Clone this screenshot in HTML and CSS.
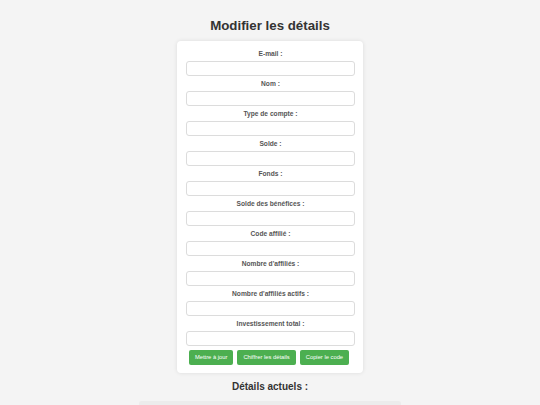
FILE: index.html
```html
<!DOCTYPE html>
<html lang="fr">
<head>
<meta charset="utf-8">
<title>Modifier les détails</title>
<link rel="stylesheet" href="styles.css">
</head>
<body>
<h1 class="title">Modifier les détails</h1>
<form class="card">
  <div class="field"><label>E-mail :</label><input type="text"></div>
  <div class="field"><label>Nom :</label><input type="text"></div>
  <div class="field"><label>Type de compte :</label><input type="text"></div>
  <div class="field"><label>Solde :</label><input type="text"></div>
  <div class="field"><label>Fonds :</label><input type="text"></div>
  <div class="field"><label>Solde des bénéfices :</label><input type="text"></div>
  <div class="field"><label>Code affilié :</label><input type="text"></div>
  <div class="field"><label>Nombre d'affiliés :</label><input type="text"></div>
  <div class="field"><label>Nombre d'affiliés actifs :</label><input type="text"></div>
  <div class="field"><label>Investissement total :</label><input type="text"></div>
  <div class="actions">
    <button type="button" class="btn">Mettre à jour</button>
    <button type="button" class="btn">Chiffrer les détails</button>
    <button type="button" class="btn">Copier le code</button>
  </div>
</form>
<h2 class="subtitle">Détails actuels :</h2>
<div class="current"></div>
</body>
</html>
```

FILE: styles.css
```css
html, body {
  margin: 0;
  padding: 0;
  background: #f4f4f4;
  font-family: "Liberation Sans", Arial, sans-serif;
  overflow: hidden;
}
body {
  padding-top: 18px;
}
.title {
  margin: 0 0 8px;
  font-size: 13.3px;
  line-height: 15px;
  font-weight: bold;
  text-align: center;
  color: #333;
}
.card {
  width: 186px;
  box-sizing: border-box;
  margin: 0 auto;
  background: #fff;
  border-radius: 4px;
  box-shadow: 0 0 4px rgba(0, 0, 0, 0.1);
  padding: 9px 8px 8px 9px;
}
.field {
  display: flex;
  flex-direction: column;
}
.field label {
  display: block;
  text-align: center;
  font-size: 6.65px;
  line-height: 8px;
  font-weight: bold;
  color: #555;
  margin-bottom: 3px;
}
.field input {
  display: block;
  box-sizing: border-box;
  width: 169px;
  height: 15px;
  margin: 0 0 4px;
  padding: 0 3px;
  border: 1px solid #dcdcdc;
  border-radius: 3px;
  background: #fff;
  font-size: 6px;
  outline: none;
}
.actions {
  display: flex;
  justify-content: center;
  gap: 4px;
  padding-right: 3px;
}
.btn {
  height: 15px;
  padding: 0 6px;
  border: none;
  border-radius: 2px;
  background: #4caf50;
  color: #fff;
  font-family: "Liberation Sans", Arial, sans-serif;
  font-size: 5.8px;
  line-height: 15px;
}
.subtitle {
  margin: 8px 0 0;
  font-size: 10px;
  line-height: 12px;
  font-weight: bold;
  text-align: center;
  color: #333;
}
.current {
  width: 262px;
  height: 20px;
  margin: 8px auto 0;
  background: #ececec;
  border-radius: 2px;
}
```
